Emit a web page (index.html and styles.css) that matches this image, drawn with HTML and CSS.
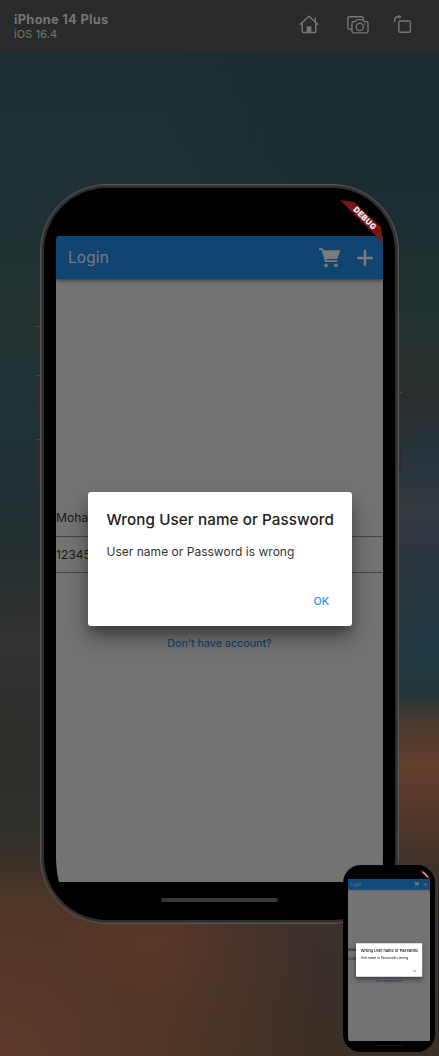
FILE: index.html
```
<!DOCTYPE html>
<html lang="en">
<head>
<meta charset="utf-8">
<title>iPhone 14 Plus</title>
<link rel="stylesheet" href="styles.css">
</head>
<body>
<svg class="defs" width="0" height="0">
  <symbol id="cart" viewBox="0 0 22 20"><path d="M0 1.2H3.3l3.5 11.9h11.6" fill="none" stroke="currentColor" stroke-width="1.8"/><path d="M3.1 2.2h18.2l-3 8.9H5.8z" fill="currentColor"/><circle cx="7" cy="17.3" r="1.9" fill="currentColor"/><circle cx="17" cy="17.3" r="1.9" fill="currentColor"/></symbol>
  <symbol id="plus" viewBox="0 0 16 16"><path d="M8 .9v14.2M.9 8h14.2" stroke="currentColor" stroke-width="2.3" stroke-linecap="round" fill="none"/></symbol>
</svg>
<div class="stage">
  <header class="toolbar">
    <div class="device"><div class="device-name">iPhone 14 Plus</div><div class="device-os">iOS 16.4</div></div>
    <nav class="tools">
      <svg class="tool-home" viewBox="0 0 20 19"><path d="M.8 9.7 10 1.2l9.2 8.5M3.2 8v8.3q0 1.2 1.2 1.2h11.2q1.2 0 1.2-1.2V8M16.3 6.7V2.5"/><path class="solid" d="M7.8 17.5v-6h4.4v6z"/></svg>
      <svg class="tool-camera" viewBox="0 0 22 18"><path d="M4.6 13.2H2.7Q.8 13.2.8 11.3V2.7Q.8.8 2.7.8h11.8q1.9 0 1.9 1.9v.9M6.7 5.5h1.6l1-1.4q.4-.5 1-.5h4.8q.6 0 1 .5l1 1.4h2.2q1.7 0 1.7 1.7v8q0 1.7-1.7 1.7H6.7q-1.7 0-1.7-1.7v-8q0-1.7 1.7-1.7z"/><circle cx="12.8" cy="10.9" r="3.6"/><circle class="solid" cx="18" cy="8" r=".5"/></svg>
      <svg class="tool-rotate" viewBox="0 0 18 19"><rect x="4.8" y="7" width="11.6" height="11.2" rx="1.5"/><path d="M.6 8.2V6.4Q.6 2.8 4.3 2.8H7"/><path class="solid" d="M4.6.8 7.5 2.8 4.6 4.8z"/></svg>
    </nav>
  </header>
  <main class="desktop">
    <section class="phone">
      <i class="key mute"></i><i class="key vol-up"></i><i class="key vol-down"></i><i class="key power"></i>
      <div class="bezel">
        <div class="screen">
          <div class="appbar"><span class="appbar-title">Login</span><svg class="cart"><use href="#cart"/></svg><svg class="plus"><use href="#plus"/></svg></div>
          <div class="page">
            <div class="field">Moha</div>
            <div class="field second">12345</div>
            <div class="signup">Don't have account?</div>
          </div>
          <div class="dialog"><h1 class="dialog-title">Wrong User name or Password</h1><p class="dialog-text">User name or Password is wrong</p><div class="dialog-action">OK</div></div>
        </div>
        <div class="home-bar"></div>
        <div class="debug"><span class="debug-band">DEBUG</span></div>
      </div>
    </section>
  </main>
  <aside class="preview">
    <section class="phone mini">
      <div class="bezel">
        <div class="screen">
          <div class="appbar"><span class="appbar-title">Login</span><svg class="cart"><use href="#cart"/></svg><svg class="plus"><use href="#plus"/></svg></div>
          <div class="page">
            <div class="field">Moha</div>
            <div class="field second">12345</div>
            <div class="signup">Don't have account?</div>
          </div>
          <div class="dialog"><h1 class="dialog-title">Wrong User name or Password</h1><p class="dialog-text">User name or Password is wrong</p><div class="dialog-action">OK</div></div>
        </div>
        <div class="home-bar"></div>
        <div class="debug"><span class="debug-band">DEBUG</span></div>
      </div>
    </section>
  </aside>
</div>
</body>
</html>
```
FILE: styles.css
```
* { box-sizing: border-box; }
body { margin: 0; font-family: Inter, "Liberation Sans", sans-serif; }
.defs { position: absolute; }
.stage {
  position: relative; width: 439px; height: 1056px; overflow: hidden;
  background:
    radial-gradient(ellipse 90px 60px at 150px 945px, #5c3728cc, transparent),
    radial-gradient(ellipse 150px 120px at 0 1056px, #5f3a2d, transparent),
    linear-gradient(#1d2e32 0, #1c2e32 70px, #1f3134 200px, #23312f 330px, #203236 380px, #222d2f 540px, #343333 645px, #2d2d2a 740px, #2f302b 820px, #3c3129 865px, #4c3628 895px, #543628 935px, #4f3526 1056px);
}
.stage::before {
  content: ""; position: absolute; inset: 0;
  background: linear-gradient(#1c2c2d 0, #1b2b2e 150px, #1c2c30 200px, #203230 310px, #2b2e2d 400px, #26343b 450px, #333740 510px, #2a3640 570px, #1f3a41 665px, #283638 698px, #4a3a2f 722px, #633d2b 765px, #55382a 810px, #3f3129 865px, #3a302c 940px, #3b2f26 1056px);
  -webkit-mask-image: linear-gradient(90deg, transparent 170px, #000 320px);
  mask-image: linear-gradient(90deg, transparent 170px, #000 320px);
}
.toolbar { position: relative; height: 52px; padding: 12px 27px 0 14px; display: flex; justify-content: space-between; background: #292b2a; color: #747574; }
.device-name { font-size: 12.8px; font-weight: 700; line-height: 15px; letter-spacing: .3px; }
.device-os { font-size: 11px; line-height: 14px; letter-spacing: .1px; }
.tools { display: flex; align-items: flex-start; padding-top: 3px; }
.tools svg { fill: none; stroke: #747574; stroke-width: 1.4; overflow: visible; }
.tools .solid { fill: #747574; stroke-width: .3; }
.tool-home { width: 20px; height: 19px; margin-right: 28px; }
.tool-camera { width: 22px; height: 18px; margin: 1px 25px 0 0; }
.tool-rotate { width: 18px; height: 19px; margin-top: -1px; }
.desktop { padding: 132px 0 0 40px; }
.phone {
  position: relative; width: 359px; height: 740px; border-radius: 67px;
  background: #2d2d2d; border: 1px solid #555; padding: 3px;
  box-shadow: inset 0 0 0 1px #3e3e3e;
}
.bezel { position: relative; width: 351px; height: 732px; padding: 48px 12px 0; border-radius: 63px; background: #000; }
.key { position: absolute; left: -5px; width: 4px; background: #2e2e2e; border-top: 1px solid #454645; }
.mute { top: 141px; height: 24px; }
.vol-up { top: 190px; height: 49px; }
.vol-down { top: 254px; height: 49px; }
.power { top: 207px; left: auto; right: -4px; width: 3px; height: 79px; }
.screen { position: relative; width: 327px; height: 646px; background: #737373; clip-path: path("M1 0H327V620Q327 635 326 646H3Q0 635 0 620V12Q0 5 1 0Z"); }
.appbar { position: relative; height: 43px; padding: 0 10px 0 12px; display: flex; align-items: center; background: #114571; color: #7b7b7b; box-shadow: 0 1px 4px #0009; }
.appbar-title { flex: 1; font-size: 15.4px; font-weight: 400; letter-spacing: .15px; }
.cart { width: 22px; height: 20px; margin-right: 16px; }
.plus { width: 16px; height: 16px; }
.page { padding-top: 222px; font-size: 12.1px; color: #1c1c1c; }
.field { height: 36px; padding-top: 9px; line-height: 16px; border-bottom: 1px solid #454545; }
.second { padding-top: 10px; }
.signup { padding-top: 63px; text-align: center; color: #15466f; font-size: 10.7px; font-weight: 500; letter-spacing: -.02px; line-height: 16px; }
.dialog { position: absolute; left: 31.5px; top: 256px; width: 264px; height: 134px; padding: 19px 19px 0; display: flex; flex-direction: column; border-radius: 3px; background: #fff; box-shadow: 0 9px 12px -3px #0005, 0 12px 22px 2px #0004; }
.dialog-title { margin: 0; font-size: 15.2px; line-height: 18px; font-weight: 450; color: #202020; letter-spacing: .1px; white-space: nowrap; }
.dialog-text { margin: 14px 0 0; font-size: 12px; line-height: 17px; color: #333; letter-spacing: .02px; white-space: nowrap; }
.dialog-action { margin: 34px 3px 0; text-align: right; font-size: 10.8px; line-height: 16px; font-weight: 450; color: #2196f3; letter-spacing: .2px; }
.home-bar { width: 117px; height: 4px; margin: 16px auto 0; border-radius: 2px; background: #373737; }
.debug { position: absolute; top: 12px; right: 12px; width: 43px; height: 43px; overflow: hidden; clip-path: polygon(0 0, 14px 2px, 41px 27px, 43px 43px); background: #7a1616; }
.debug-band { position: absolute; left: -4px; top: 11.5px; width: 58px; text-align: center; transform: rotate(45deg); color: #eee; font-size: 8px; line-height: 12px; font-weight: 900; letter-spacing: .2px; }
.preview { position: absolute; left: 343px; top: 865px; width: 92px; height: 187px; border-radius: 18px; background: #000; overflow: hidden; }
.mini { transform: scale(.2508); transform-origin: 0 0; margin: .8px 0 0 1px; background: #000; border-color: #000; box-shadow: none; }
.mini .appbar { background: #124c7e; }
.mini .page { color: #000; }
.mini .field { border-color: transparent; }
.mini .dialog-title, .mini .dialog-text { color: #000; }
.mini .home-bar { background: #171717; }
```
